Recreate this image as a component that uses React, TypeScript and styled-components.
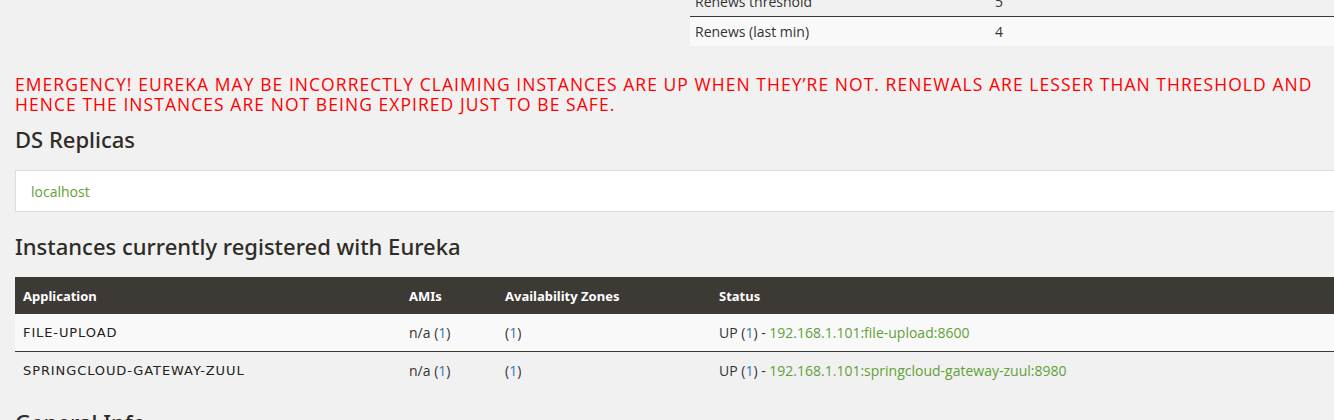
import React from "react";
import styled, { createGlobalStyle } from "styled-components";

const GlobalStyle = createGlobalStyle`
  html, body {
    margin: 0;
    padding: 0;
    background: #f1f1f1;
    overflow: hidden;
  }
  body {
    font-family: "Open Sans", "Liberation Sans", sans-serif;
    font-size: 14px;
    color: #333333;
  }
`;

const Page = styled.div`
  width: 1350px;
  padding: 0 15px;
  margin-top: -13px;
`;

const SplitRow = styled.div`
  display: grid;
  grid-template-columns: 1fr 1fr;
`;

const InfoTable = styled.table`
  width: 100%;
  border-collapse: collapse;
  td {
    padding: 0 5px;
    height: 29px;
    vertical-align: middle;
  }
  td:first-child {
    width: 290px;
  }
  tr + tr td {
    border-top: 1px solid #3d3935;
  }
`;

const InfoRow = styled.tr<{ $striped?: boolean }>`
  background: ${(p) => (p.$striped ? "#f9f9f9" : "transparent")};
`;

const Emergency = styled.h4`
  margin: 28px 0 0;
  font-family: "Open Sans", "Liberation Sans", sans-serif;
  font-weight: 400;
  font-size: 17.5px;
  letter-spacing: 1.05px;
  line-height: 20px;
  color: #ff0000;
  text-transform: uppercase;
  white-space: nowrap;
`;

const Heading = styled.h1<{ $gap?: number }>`
  margin: ${(p) => p.$gap ?? 10}px 0 0;
  font-family: "Noto Sans", "DejaVu Sans", sans-serif;
  font-weight: 500;
  font-size: 22px;
  line-height: 30px;
  color: #2f2b27;
`;

const ReplicaBox = styled.ul`
  list-style: none;
  margin: 16px 0 0;
  padding: 0 15px;
  height: 40px;
  display: flex;
  align-items: center;
  background: #ffffff;
  border: 1px solid #dddddd;
`;

const Link = styled.a`
  color: #5fa134;
  text-decoration: none;
`;

const Count = styled.a`
  color: #337ab7;
  text-decoration: none;
`;

const InstanceTable = styled.table`
  width: 100%;
  margin-top: 16px;
  border-collapse: collapse;
  th,
  td {
    padding: 0 8px;
    text-align: left;
    vertical-align: middle;
  }
  th {
    height: 37px;
    background: #3d3935;
    color: #ffffff;
    font-family: "Noto Sans", "DejaVu Sans", sans-serif;
    font-weight: 700;
    font-size: 13px;
  }
  td {
    height: 37px;
  }
  tbody tr + tr td {
    border-top: 1px solid #3d3935;
  }
`;

const InstanceRow = styled.tr<{ $striped?: boolean }>`
  background: ${(p) => (p.$striped ? "#f9f9f9" : "transparent")};
`;

const AppName = styled.td`
  font-family: "DejaVu Sans", "Noto Sans", sans-serif;
  font-size: 13px;
  letter-spacing: 0.9px;
  color: #222222;
`;

const instances = [
  { app: "FILE-UPLOAD", id: "192.168.1.101:file-upload:8600" },
  {
    app: "SPRINGCLOUD-GATEWAY-ZUUL",
    id: "192.168.1.101:springcloud-gateway-zuul:8980"
  }
];

const App = () => {
  return (
    <>
      <GlobalStyle />
      <Page>
        <SplitRow>
          <div />
          <InfoTable>
            <tbody>
              <InfoRow>
                <td>Renews threshold</td>
                <td>5</td>
              </InfoRow>
              <InfoRow $striped>
                <td>Renews (last min)</td>
                <td>4</td>
              </InfoRow>
            </tbody>
          </InfoTable>
        </SplitRow>

        <Emergency>
          Emergency! Eureka may be incorrectly claiming instances are up when
          they’re not. Renewals are lesser than threshold and
          <br />
          hence the instances are not being expired just to be safe.
        </Emergency>

        <Heading>DS Replicas</Heading>
        <ReplicaBox>
          <li>
            <Link href="#">localhost</Link>
          </li>
        </ReplicaBox>

        <Heading $gap={19}>Instances currently registered with Eureka</Heading>
        <InstanceTable>
          <colgroup>
            <col style={{ width: 386 }} />
            <col style={{ width: 96 }} />
            <col style={{ width: 214 }} />
            <col />
          </colgroup>
          <thead>
            <tr>
              <th>Application</th>
              <th>AMIs</th>
              <th>Availability Zones</th>
              <th>Status</th>
            </tr>
          </thead>
          <tbody>
            {instances.map((item, i) => (
              <InstanceRow key={item.app} $striped={i % 2 === 0}>
                <AppName>{item.app}</AppName>
                <td>
                  n/a (<Count href="#">1</Count>)
                </td>
                <td>
                  (<Count href="#">1</Count>)
                </td>
                <td>
                  UP (<Count href="#">1</Count>) -{" "}
                  <Link href="#">{item.id}</Link>
                </td>
              </InstanceRow>
            ))}
          </tbody>
        </InstanceTable>

        <Heading $gap={18}>General Info</Heading>
      </Page>
    </>
  );
};

export default App;
